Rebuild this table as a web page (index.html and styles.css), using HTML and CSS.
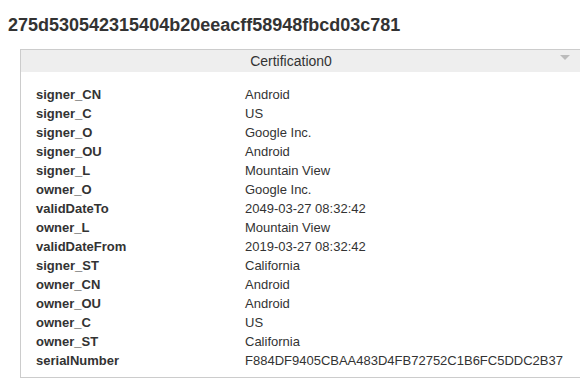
FILE: index.html
```html
<!DOCTYPE html>
<html lang="en">
<head>
  <meta charset="UTF-8">
  <title>Certificate</title>
  <link rel="stylesheet" href="styles.css">
</head>
<body>
  <h2 class="hash">275d530542315404b20eeacff58948fbcd03c781</h2>
  <div class="panel">
    <div class="panel-head">
      <span>Certification0</span>
      <span class="arrow"></span>
    </div>
    <table class="cert">
      <tr><th>signer_CN</th><td>Android</td></tr>
      <tr><th>signer_C</th><td>US</td></tr>
      <tr><th>signer_O</th><td>Google Inc.</td></tr>
      <tr><th>signer_OU</th><td>Android</td></tr>
      <tr><th>signer_L</th><td>Mountain View</td></tr>
      <tr><th>owner_O</th><td>Google Inc.</td></tr>
      <tr><th>validDateTo</th><td>2049-03-27 08:32:42</td></tr>
      <tr><th>owner_L</th><td>Mountain View</td></tr>
      <tr><th>validDateFrom</th><td>2019-03-27 08:32:42</td></tr>
      <tr><th>signer_ST</th><td>California</td></tr>
      <tr><th>owner_CN</th><td>Android</td></tr>
      <tr><th>owner_OU</th><td>Android</td></tr>
      <tr><th>owner_C</th><td>US</td></tr>
      <tr><th>owner_ST</th><td>California</td></tr>
      <tr><th>serialNumber</th><td>F884DF9405CBAA483D4FB72752C1B6FC5DDC2B37</td></tr>
    </table>
  </div>
</body>
</html>
```

FILE: styles.css
```css
body {
  margin: 0;
  padding: 0 0 0 8px;
  font-family: 'Liberation Sans', Arial, sans-serif;
  color: #333;
  background: #fff;
}
.hash {
  margin: 0;
  padding-top: 14px;
  font-size: 18px;
  line-height: 22px;
  font-weight: bold;
  color: #333;
}
.panel {
  margin: 13px 0 0 12px;
  border: 1px solid #ccc;
  border-right: none;
}
.panel-head {
  position: relative;
  background: #eee;
  height: 22px;
  line-height: 22px;
  font-size: 14px;
  text-align: center;
  padding-right: 19px;
}
.arrow {
  position: absolute;
  top: 5px;
  left: 539px;
  width: 0;
  height: 0;
  border-left: 5px solid transparent;
  border-right: 5px solid transparent;
  border-top: 5px solid #bbb;
}
.cert {
  border-collapse: collapse;
  margin: 13px 0 7px 15px;
  font-size: 13px;
}
.cert th,
.cert td {
  padding: 0;
  height: 19px;
  line-height: 19px;
  text-align: left;
  vertical-align: middle;
}
.cert th {
  width: 209px;
  font-weight: bold;
}
```
